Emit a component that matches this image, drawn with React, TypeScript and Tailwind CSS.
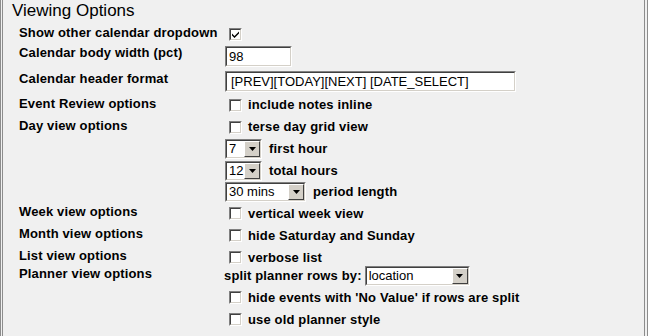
import React from "react";

const font = { fontFamily: '"Liberation Sans", Arial, sans-serif' };

// classic sunken border box
const Sunken: React.FC<{ className?: string; children?: React.ReactNode }> = ({ className = "", children }) => (
  <div className={`border border-t-[#808080] border-l-[#808080] border-r-white border-b-white ${className}`}>
    <div className="h-full w-full border border-t-[#404040] border-l-[#404040] border-r-[#d4d0c8] border-b-[#d4d0c8] bg-white flex items-center">
      {children}
    </div>
  </div>
);

const Checkbox: React.FC<{ checked?: boolean }> = ({ checked }) => (
  <Sunken className="w-[13px] h-[13px] shrink-0">
    {checked && (
      <svg width="9" height="9" viewBox="0 0 9 9" className="block">
        <path d="M1 3.5 L3.5 6 L8 1.5 L8 3.5 L3.5 8 L1 5.5 Z" fill="#000" />
      </svg>
    )}
  </Sunken>
);

const Select: React.FC<{ value: string; width: string }> = ({ value, width }) => (
  <Sunken className={`${width} h-[20px] shrink-0`}>
    <span className="flex-1 pl-[2px] text-[13px] leading-[16px] text-black">{value}</span>
    <div className="w-[16px] h-[16px] bg-[#d4d0c8] border border-t-white border-l-white border-r-[#404040] border-b-[#404040] flex items-center justify-center">
      <svg width="7" height="4" viewBox="0 0 7 4" className="block">
        <path d="M0 0 H7 L3.5 4 Z" fill="#000" />
      </svg>
    </div>
  </Sunken>
);

const Bold: React.FC<{ children: React.ReactNode }> = ({ children }) => (
  <span className="font-bold text-[13px] tracking-[0.15px]">{children}</span>
);

const CheckRow: React.FC<{ label: string; checked?: boolean }> = ({ label, checked }) => (
  <div className="flex items-center h-[22px] pt-[1px] pl-[4px] gap-[6px]">
    <Checkbox checked={checked} />
    {label && <Bold>{label}</Bold>}
  </div>
);

const Row: React.FC<{ label: string; pt?: string; className?: string; children: React.ReactNode }> = ({
  label,
  pt = "pt-[2px]",
  className = "",
  children,
}) => (
  <div className={`flex items-start ${className}`}>
    <div className={`w-[206px] shrink-0 font-bold text-[13px] tracking-[0.15px] leading-[15px] ${pt}`}>{label}</div>
    <div className="flex flex-col">{children}</div>
  </div>
);

export default function App() {
  return (
    <div
      style={font}
      className="w-[648px] h-[336px] overflow-hidden bg-[#f0f0f0] text-black border-l-[3px] border-r-[4px] border-double border-y-0 border-[#8c8c8c]"
    >
      <div className="pl-[9px] pt-[1px] h-[22px] text-[17px] leading-[20px]">Viewing Options</div>
      <div className="pl-[16px]">
        <Row label="Show other calendar dropdown" pt="pt-[3px]" className="h-[22px]">
          <div className="pt-[6px] pl-[4px]">
            <Checkbox checked />
          </div>
        </Row>
        <Row label="Calendar body width (pct)" pt="pt-[1px]" className="h-[24px]">
          <Sunken className="w-[67px] h-[21px] mt-[2px]">
            <span className="pl-[2px] text-[13px]">98</span>
          </Sunken>
        </Row>
        <Row label="Calendar header format" pt="pt-[2.5px]" className="h-[25.5px]">
          <Sunken className="w-[291px] h-[21px] mt-[3px]">
            <span className="pl-[4px] text-[13px]">[PREV][TODAY][NEXT] [DATE_SELECT]</span>
          </Sunken>
        </Row>
        <Row label="Event Review options">
          <CheckRow label="include notes inline" />
        </Row>
        <Row label="Day view options">
          <CheckRow label="terse day grid view" />
          <div className="flex flex-col gap-[1.5px] mt-[1.5px]">
            <div className="flex items-center gap-[7px]">
              <Select value="7" width="w-[37px]" />
              <Bold>first hour</Bold>
            </div>
            <div className="flex items-center gap-[7px]">
              <Select value="12" width="w-[37px]" />
              <Bold>total hours</Bold>
            </div>
            <div className="flex items-center gap-[7px]">
              <Select value="30 mins" width="w-[81px]" />
              <Bold>period length</Bold>
            </div>
          </div>
        </Row>
        <Row label="Week view options">
          <CheckRow label="vertical week view" />
        </Row>
        <Row label="Month view options">
          <CheckRow label="hide Saturday and Sunday" />
        </Row>
        <Row label="List view options">
          <CheckRow label="verbose list" />
        </Row>
        <Row label="Planner view options" pt="pt-0" className="-mt-[2px]">
          <div className="flex items-center gap-[3px] h-[20px] -ml-[1px]">
            <Bold>split planner rows by:</Bold>
            <Select value="location" width="w-[105px]" />
          </div>
          <CheckRow label="hide events with 'No Value' if rows are split" />
          <CheckRow label="use old planner style" />
        </Row>
      </div>
    </div>
  );
}
